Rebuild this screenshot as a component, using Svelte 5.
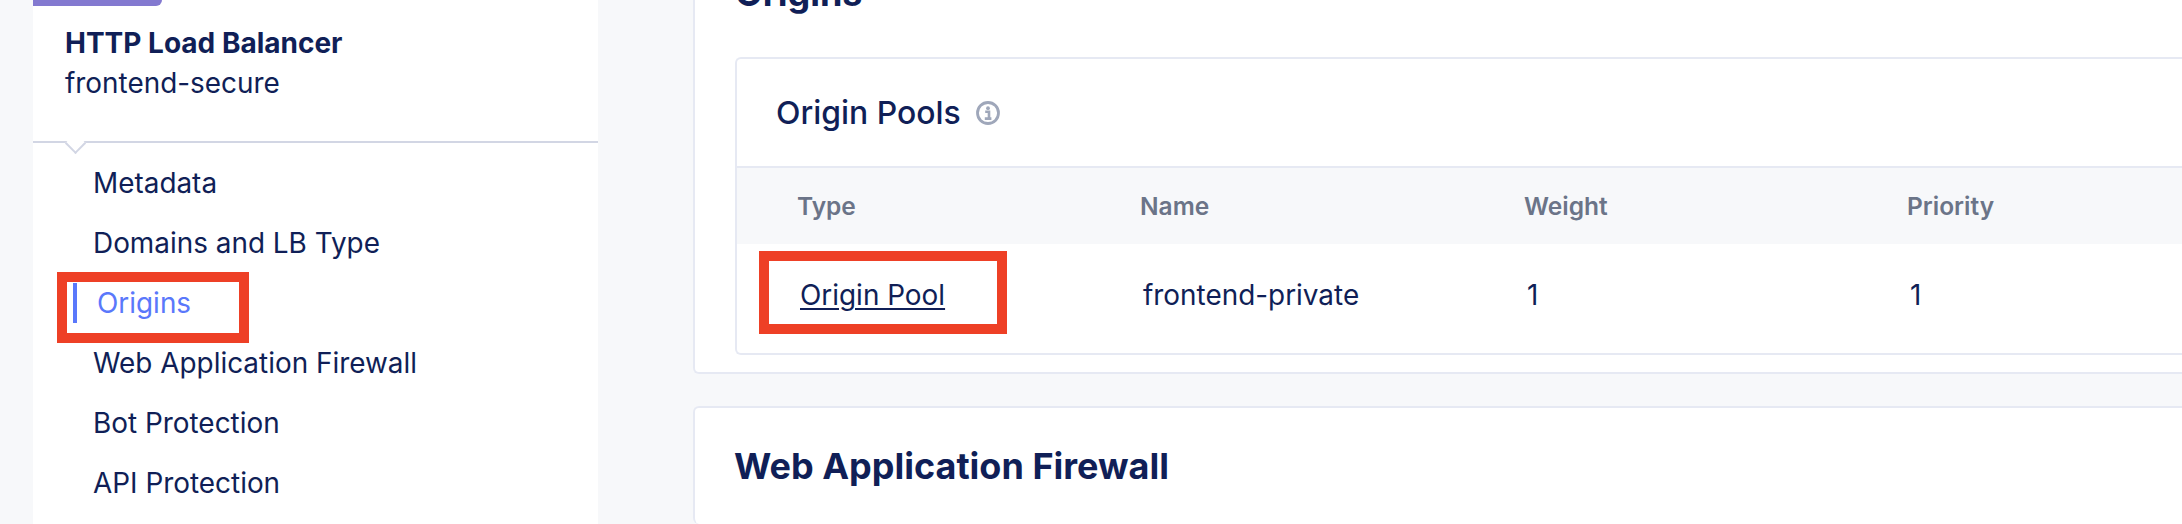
<script lang="ts">
  const navItems = ['Metadata', 'Domains and LB Type', 'Origins', 'Web Application Firewall', 'Bot Protection', 'API Protection'];
  const activeItem = 'Origins';
  const columns = ['Type', 'Name', 'Weight', 'Priority'];
</script>

<div class="page">
  <aside class="sidebar">
    <div class="tab"></div>
    <div class="object">
      <div class="object-type">HTTP Load Balancer</div>
      <div class="object-name">frontend-secure</div>
    </div>
    <nav class="nav">
      <span class="caret"></span>
      {#each navItems as item}
        <div class="nav-item" class:active={item === activeItem}>
          {#if item === activeItem}<span class="bar"></span>{/if}
          {item}
        </div>
      {/each}
      <span class="callout callout-nav"></span>
    </nav>
  </aside>

  <main class="main">
    <section class="card origins">
      <h2>Origins</h2>
      <div class="panel">
        <div class="panel-head">
          <h3>Origin Pools</h3>
          <svg class="info" viewBox="0 0 24 24" width="24" height="24" fill="none" aria-hidden="true">
            <circle cx="12" cy="12" r="10.5" stroke="#9fa7ba" stroke-width="2.8" />
            <circle cx="12" cy="7.2" r="1.9" fill="#9fa7ba" />
            <path d="M9.2 10.8h3.8v6.4M8.8 17.6h6.6" stroke="#9fa7ba" stroke-width="2.6" />
          </svg>
        </div>
        <div class="row th">
          {#each columns as col}<div>{col}</div>{/each}
        </div>
        <div class="row td">
          <div><a href="#pool">Origin Pool</a></div>
          <div>frontend-private</div>
          <div>1</div>
          <div>1</div>
        </div>
        <span class="callout callout-pool"></span>
      </div>
    </section>
    <section class="card waf">
      <h2>Web Application Firewall</h2>
    </section>
  </main>
</div>

<style>
  :global(body) {
    margin: 0;
    background: #f7f8fa;
  }

  .page {
    display: flex;
    width: 2182px;
    height: 524px;
    overflow: hidden;
    background: #f7f8fa;
    font-family: Inter, "Liberation Sans", sans-serif;
    color: #101f57;
  }

  .sidebar {
    width: 565px;
    margin-left: 33px;
    flex-shrink: 0;
    background: #fff;
  }

  .tab {
    width: 129px;
    height: 6px;
    background: #8379d0;
    border-bottom-right-radius: 6px;
  }

  .object {
    height: 118px;
    padding: 17px 0 0 32px;
    border-bottom: 2px solid #d2d6e4;
  }

  .object-type {
    font-size: 28px;
    font-weight: 700;
    line-height: 40px;
  }

  .object-name {
    font-size: 27.9px;
    line-height: 41px;
  }

  .nav {
    position: relative;
    padding-top: 10px;
  }

  .caret {
    position: absolute;
    left: 35px;
    top: -7px;
    width: 13px;
    height: 13px;
    background: #fff;
    border-right: 2px solid #d2d6e4;
    border-bottom: 2px solid #d2d6e4;
    transform: rotate(45deg);
  }

  .nav-item {
    display: flex;
    align-items: center;
    height: 60px;
    padding-left: 60px;
    font-size: 27.9px;
  }

  .nav-item.active {
    color: #5a78fb;
    padding-left: 40px;
    gap: 20px;
  }

  .bar {
    width: 4px;
    height: 40px;
    background: #5a78fb;
  }

  .callout {
    position: absolute;
    box-sizing: border-box;
    border: 10px solid #ee4026;
    pointer-events: none;
  }

  .callout-nav {
    left: 24px;
    top: 129px;
    width: 192px;
    height: 71px;
  }

  .main {
    flex: 1;
    margin-left: 95px;
    display: flex;
    flex-direction: column;
    gap: 32px;
  }

  .card {
    background: #fff;
    border: 2px solid #e6e9f3;
    border-right: none;
    border-radius: 6px 0 0 6px;
  }

  .origins {
    margin-top: -29px;
    padding: 0 0 17px 40px;
    border-top: none;
  }

  h2 {
    margin: 0;
    font-size: 36px;
    font-weight: 700;
    line-height: 44px;
  }

  .panel {
    position: relative;
    margin-top: 42px;
    border: 2px solid #e6e9f3;
    border-right: none;
    border-radius: 6px 0 0 6px;
  }

  .panel-head {
    display: flex;
    align-items: center;
    gap: 15px;
    height: 107px;
    padding-left: 39px;
    border-bottom: 2px solid #e6e9f3;
  }

  h3 {
    margin: 0;
    font-size: 31.9px;
    font-weight: 500;
  }

  .row {
    display: grid;
    grid-template-columns: 343px 384px 383px 1fr;
    padding-left: 60px;
    align-items: center;
  }

  .th {
    height: 76px;
    background: #f7f8fa;
    font-size: 24.5px;
    font-weight: 600;
    color: #6b7488;
  }

  .td {
    height: 101px;
    padding-left: 63px;
    padding-bottom: 8px;
    font-size: 27.9px;
  }

  .td a {
    color: inherit;
    text-decoration: underline;
    text-decoration-thickness: 2px;
    text-underline-offset: 3px;
  }

  .callout-pool {
    left: 22px;
    top: 192px;
    width: 248px;
    height: 83px;
  }

  .waf {
    flex: 1;
    padding: 36px 0 0 39px;
    border-bottom: none;
  }
</style>
